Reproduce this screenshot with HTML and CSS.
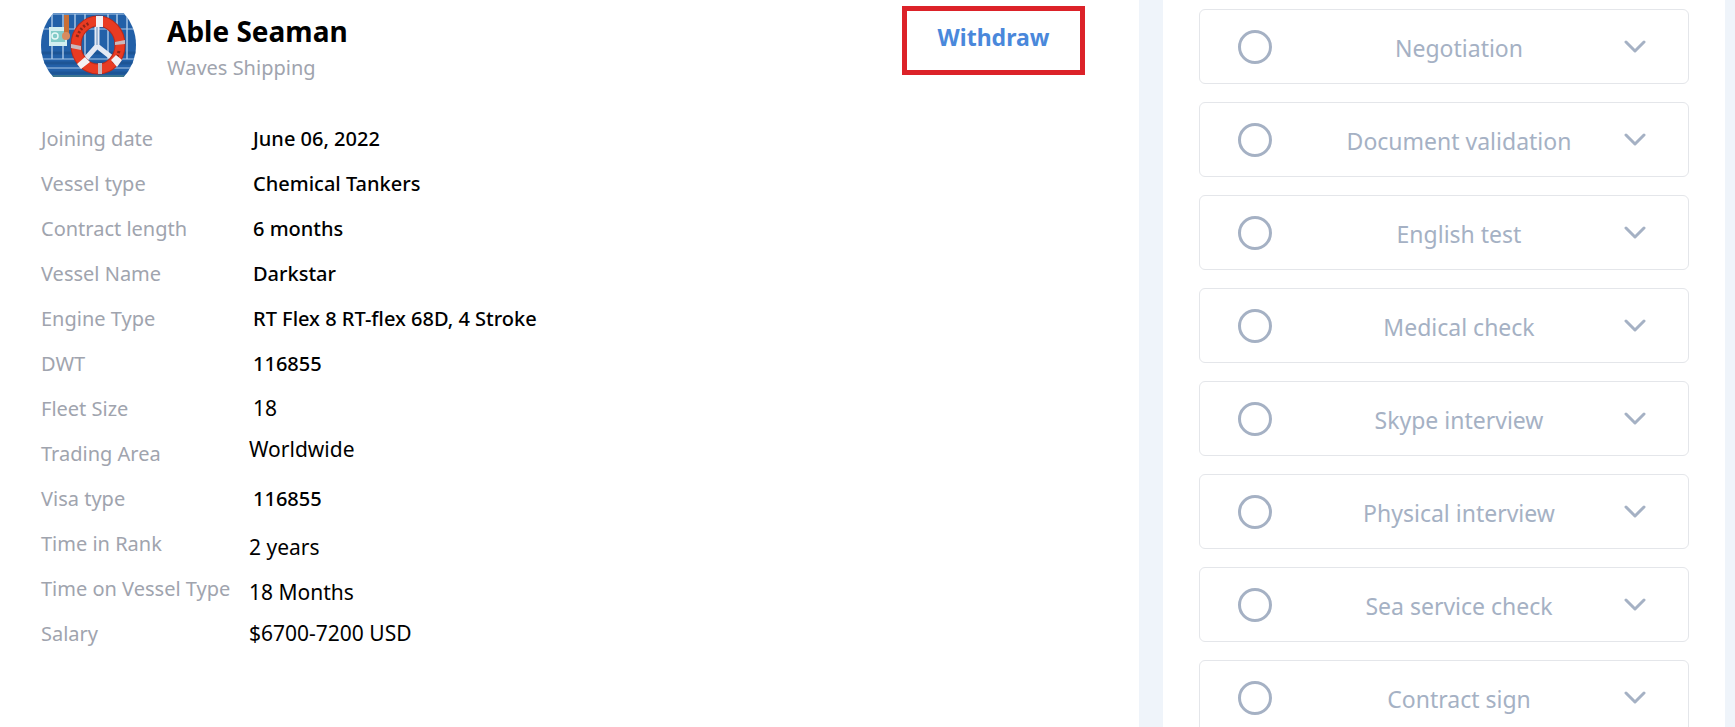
FILE: index.html
```html
<!DOCTYPE html>
<html lang="en">
    <head>
        <meta charset="utf-8">
        <title>Able Seaman</title>
        <link rel="stylesheet" href="styles.css">
    </head>
    <body>
        <main class="job">
            <div class="job-header">
                <svg class="avatar" viewBox="0 0 95 64" role="img" aria-label="Waves Shipping">
                    <clipPath id="round"><circle cx="47.5" cy="32" r="47.5"/></clipPath>
                    <g clip-path="url(#round)">
                        <rect width="95" height="64" fill="#2260a8"/>
                        <path d="M0 50h95M0 60h95M0 40h95" stroke="#1d5595" stroke-width="3"/>
                        <path d="M11 1v45M22 1v45M34 1v45M44 1v45M67 1v45M76 1v45M86 1v45" stroke="#b9d3ee" stroke-width="1.3"/>
                        <path d="M0 1h95M0 16h95M0 46h95M0 55h95" stroke="#a9c8e8" stroke-width="1.2"/>
                        <path d="M0 63h95" stroke="#3b7590" stroke-width="2"/>
                        <path d="M8 14h18v19H8z" fill="#d3eef0"/>
                        <path d="M10 18h14v11H10z" fill="#83cbc8"/>
                        <circle cx="14" cy="23" r="3" fill="none" stroke="#e9f8f7" stroke-width="1.5"/>
                        <path d="M23 2h5v22h-5z" fill="#c96f35"/>
                        <circle cx="25" cy="23" r="4" fill="#d88b5f"/>
                        <path d="M56 12v22M56 33L41 50M56 33l19 15" stroke="#e4e9f4" stroke-width="5" fill="none"/>
                        <path d="M56 14v18" stroke="#8fa9cd" stroke-width="1.5"/>
                        <ellipse cx="57" cy="32" rx="22" ry="24" fill="none" stroke="#b92a1c" stroke-width="11"/>
                        <ellipse cx="57" cy="32" rx="22" ry="24" fill="none" stroke="#e93b22" stroke-width="9"/>
                        <path d="M36 24Q40 13 49 10M78 38q-2 8-6 12" stroke="#8e2519" stroke-width="3" stroke-dasharray="2 2" fill="none"/>
                        <path d="M55 3h7v11h-7zM36 51l8-7 5 5-9 7zM70 47l5-5 6 5-5 7z" fill="#f4f1f4"/>
                        <path d="M30 31l10 2v4l-10-2zM74 29l10-2v4l-10 1zM57 50h4v11h-4z" fill="#c9b9bd"/>
                    </g>
                </svg>
                <div class="job-title">
                    <h1>Able Seaman</h1>
                    <p>Waves Shipping</p>
                </div>
                <button class="withdraw" type="button">Withdraw</button>
            </div>
            <table class="details">
                <tr>
                    <th>Joining date</th>
                    <td>June 06, 2022</td>
                </tr>
                <tr>
                    <th>Vessel type</th>
                    <td>Chemical Tankers</td>
                </tr>
                <tr>
                    <th>Contract length</th>
                    <td>6 months</td>
                </tr>
                <tr>
                    <th>Vessel Name</th>
                    <td>Darkstar</td>
                </tr>
                <tr>
                    <th>Engine Type</th>
                    <td>RT Flex 8 RT-flex 68D, 4 Stroke</td>
                </tr>
                <tr>
                    <th>DWT</th>
                    <td>116855</td>
                </tr>
                <tr>
                    <th>Fleet Size</th>
                    <td class="plain">18</td>
                </tr>
                <tr>
                    <th>Trading Area</th>
                    <td class="plain wide high">Worldwide</td>
                </tr>
                <tr>
                    <th>Visa type</th>
                    <td>116855</td>
                </tr>
                <tr>
                    <th>Time in Rank</th>
                    <td class="plain wide low">2 years</td>
                </tr>
                <tr>
                    <th>Time on Vessel Type</th>
                    <td class="plain wide low">18 Months</td>
                </tr>
                <tr>
                    <th>Salary</th>
                    <td class="plain wide">$6700-7200 USD</td>
                </tr>
            </table>
        </main>
        <aside class="steps">
            <button class="step" type="button">
                <span class="circle"></span>
                <span class="step-name">Negotiation</span>
                <svg class="chevron" viewBox="0 0 22 14"><path d="M2 2l9 9 9-9"/></svg>
            </button>
            <button class="step" type="button">
                <span class="circle"></span>
                <span class="step-name">Document validation</span>
                <svg class="chevron" viewBox="0 0 22 14"><path d="M2 2l9 9 9-9"/></svg>
            </button>
            <button class="step" type="button">
                <span class="circle"></span>
                <span class="step-name">English test</span>
                <svg class="chevron" viewBox="0 0 22 14"><path d="M2 2l9 9 9-9"/></svg>
            </button>
            <button class="step" type="button">
                <span class="circle"></span>
                <span class="step-name">Medical check</span>
                <svg class="chevron" viewBox="0 0 22 14"><path d="M2 2l9 9 9-9"/></svg>
            </button>
            <button class="step" type="button">
                <span class="circle"></span>
                <span class="step-name">Skype interview</span>
                <svg class="chevron" viewBox="0 0 22 14"><path d="M2 2l9 9 9-9"/></svg>
            </button>
            <button class="step" type="button">
                <span class="circle"></span>
                <span class="step-name">Physical interview</span>
                <svg class="chevron" viewBox="0 0 22 14"><path d="M2 2l9 9 9-9"/></svg>
            </button>
            <button class="step" type="button">
                <span class="circle"></span>
                <span class="step-name">Sea service check</span>
                <svg class="chevron" viewBox="0 0 22 14"><path d="M2 2l9 9 9-9"/></svg>
            </button>
            <button class="step" type="button">
                <span class="circle"></span>
                <span class="step-name">Contract sign</span>
                <svg class="chevron" viewBox="0 0 22 14"><path d="M2 2l9 9 9-9"/></svg>
            </button>
        </aside>
    </body>
</html>
```
FILE: styles.css
```css
* {
    box-sizing: border-box;
}
body {
    margin: 0;
    padding-right: 10px;
    height: 100vh;
    overflow: hidden;
    display: grid;
    grid-template-columns: 1139fr 562fr;
    column-gap: 24px;
    background-color: #eff4fa;
    font-family: "Noto Sans", "Open Sans", sans-serif;
    color: #000;
}
button {
    font-family: inherit;
    background: none;
    cursor: pointer;
}
.job {
    padding: 6px 54px 0 41px;
    background-color: #fff;
}
.job-header {
    display: flex;
    align-items: flex-start;
}
.avatar {
    width: 95px;
    height: 64px;
    margin: 7px 31px 0 0;
}
.job-title {
    flex: 1;
    padding-top: 5px;
}
h1 {
    margin: 0;
    font-size: 28px;
    line-height: 40px;
    font-weight: 700;
}
p {
    margin: 0;
    font-size: 20px;
    line-height: 34px;
    font-weight: 400;
    color: #a0a4ae;
}
.withdraw {
    width: 183px;
    height: 69px;
    padding: 0 0 8px;
    border: 5px solid #dc2229;
    font-size: 23px;
    font-weight: 700;
    color: #4a88db;
}
.details {
    margin-top: 31px;
    border-collapse: collapse;
}
tr {
    height: 45px;
}
th, td {
    padding: 0;
    text-align: left;
    line-height: 37px;
}
th {
    width: 205px;
    font-size: 20px;
    font-weight: 400;
    color: #a0a4ae;
}
td {
    padding-left: 7px;
    font-size: 20px;
    font-weight: 500;
}
.plain {
    font-size: 21px;
    font-weight: 400;
}
.wide {
    padding-left: 3px;
}
.high {
    vertical-align: top;
}
.low {
    vertical-align: bottom;
}
.steps {
    display: flex;
    flex-direction: column;
    gap: 18px;
    padding: 9px 36px 0;
    background-color: #fff;
}
.step {
    display: flex;
    flex-shrink: 0;
    align-items: center;
    height: 75px;
    padding: 0 42px 0 38px;
    border: 1px solid #e4e6ea;
    border-radius: 6px;
    color: #a5b1c4;
}
.circle {
    width: 34px;
    height: 34px;
    border: 3px solid #a5b1c4;
    border-radius: 50%;
}
.step-name {
    flex: 1;
    padding: 2px 0 0 22px;
    font-size: 23px;
    line-height: 32px;
}
.chevron {
    width: 22px;
    height: 14px;
    fill: none;
    stroke: #a5b1c4;
    stroke-width: 3;
    stroke-linecap: round;
    stroke-linejoin: round;
}
```
